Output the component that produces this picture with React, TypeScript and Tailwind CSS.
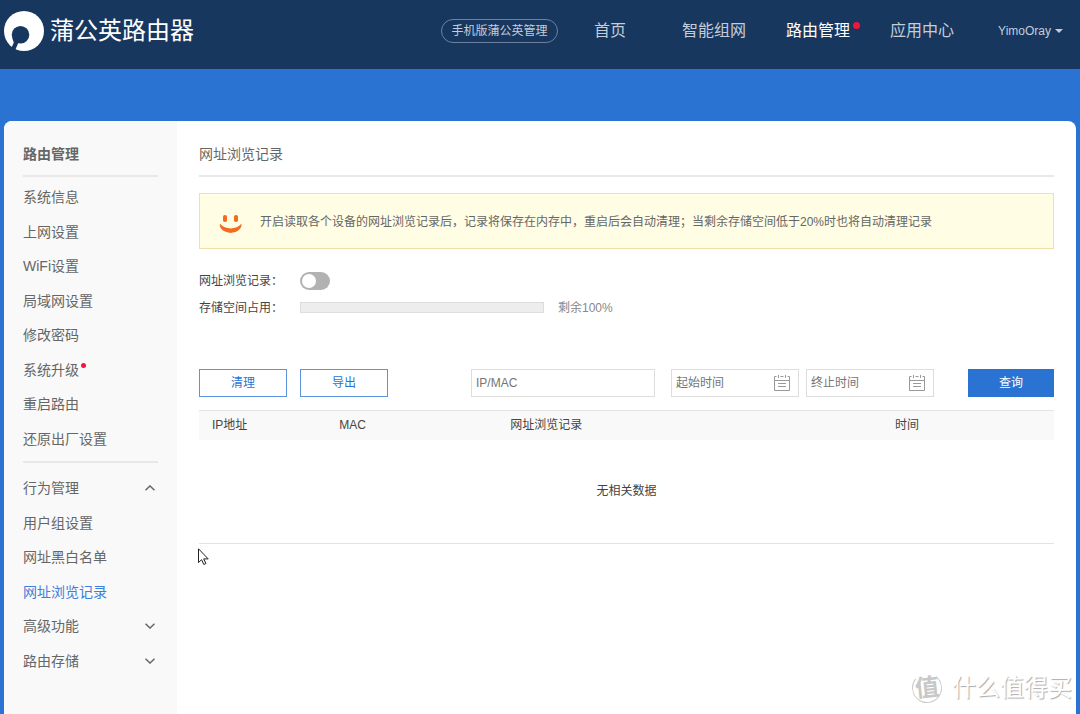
import React, { useState } from "react";

const settings = ["系统信息", "上网设置", "WiFi设置", "局域网设置", "修改密码", "系统升级", "重启路由", "还原出厂设置"];

const sections: { label: string; open?: boolean; children?: string[] }[] = [
  { label: "行为管理", open: true, children: ["用户组设置", "网址黑白名单", "网址浏览记录"] },
  { label: "高级功能" },
  { label: "路由存储" },
];

function Logo() {
  return (
    <svg className="size-10 shrink-0" viewBox="0 0 40 40" aria-hidden="true">
      <circle cx="20" cy="20" r="20" fill="#fff" />
      <circle cx="16.500" cy="23.800" r="8.800" fill="#17375f" />
      <path d="M8.200 27 L9.800 31.500 L7.500 36.800 L11 39.500 L14.500 31.500 Z" fill="#17375f" />
    </svg>
  );
}

function Chevron({ up = false }: { up?: boolean }) {
  return (
    <svg className="h-[6px] w-[10px]" viewBox="0 0 10 6" fill="none" stroke="#666" strokeWidth="1.400" aria-hidden="true">
      <path d={up ? "M0.500 5.300 L5 0.900 L9.500 5.300" : "M0.500 0.700 L5 5.100 L9.500 0.700"} />
    </svg>
  );
}

function Smile() {
  return (
    <svg className="h-[18px] w-[24px] shrink-0" viewBox="0 0 24 18" fill="#f46a1f" aria-hidden="true">
      <rect x="4" y="0" width="4" height="7" rx="1.800" />
      <rect x="15" y="0" width="4" height="7" rx="1.800" />
      <path d="M1 8.800 C6 15 17.500 15 22.300 8.800 C23.600 13.200 18 17.900 11.600 17.900 C5.200 17.900 -0.300 13.200 1 8.800 Z" />
    </svg>
  );
}

function Calendar() {
  return (
    <svg className="h-4 w-4" viewBox="0 0 16 16" fill="none" stroke="#999" aria-hidden="true">
      <path d="M2.500 1.500 H0.500 V15.500 H15.500 V1.500 H13.500 M6.500 1.500 H9.500 M0.500 5.500 H15.500 M4 8.500 H12 M4 11.500 H12" />
      <path d="M4.500 0 V3 M11.500 0 V3" />
    </svg>
  );
}

function DateBox({ label }: { label: string }) {
  return (
    <label className="flex h-7 w-32 items-center border border-[#ddd] pr-2">
      <input aria-label={label} placeholder={label} className="h-full w-0 flex-1 pl-1 outline-none placeholder:text-[#757575]" />
      <Calendar />
    </label>
  );
}

function SideLink({ label, active = false }: { label: string; active?: boolean }) {
  return (
    <a href="#" className={active ? "text-[#3d80d8]" : "text-[#666]"}>
      {label}
    </a>
  );
}

function Sidebar() {
  return (
    <nav className="w-[173px] shrink-0 bg-[#f9f9f9] px-[19px] pb-9 text-sm text-[#666]">
      <h2 className="flex h-14 items-center border-b-2 border-[#e8e8e8] pt-3 font-bold">路由管理</h2>
      <ul className="mt-[3px] grid h-[276px] auto-rows-fr items-center">
        {settings.map((label) => (
          <li key={label} className="flex items-center">
            <SideLink label={label} />
            {label === "系统升级" && <span className="mb-2 ml-[2px] size-[5px] rounded-full bg-[#f5143c]" />}
          </li>
        ))}
      </ul>
      <ul className="mt-[5px] grid h-[217px] auto-rows-fr items-center border-t-2 border-[#e8e8e8] pt-2">
        {sections.map((s) => (
          <React.Fragment key={s.label}>
            <li>
              <button type="button" aria-expanded={!!s.open} className="flex w-full items-center justify-between pr-[3px]">
                {s.label}
                <Chevron up={s.open} />
              </button>
            </li>
            {s.children?.map((c) => (
              <li key={c}>
                <SideLink label={c} active={c === "网址浏览记录"} />
              </li>
            ))}
          </React.Fragment>
        ))}
      </ul>
    </nav>
  );
}

function Header() {
  return (
    <header className="flex h-[69px] items-center bg-[#17375f] pr-[17px] pb-2 pl-1 text-base text-[#c4cdd8]">
      <Logo />
      <span className="ml-[6px] text-2xl text-white">蒲公英路由器</span>
      <nav className="ml-auto flex items-center">
        <a href="#" className="mr-9 flex h-6 w-[117px] items-center justify-center rounded-full border border-[#6e82a0] text-xs">
          手机版蒲公英管理
        </a>
        <a href="#" className="mr-14">首页</a>
        <a href="#" className="mr-10">智能组网</a>
        <a href="#" className="relative mr-10 text-white">
          路由管理
          <span className="absolute top-[3px] -right-[10px] size-[7px] rounded-full bg-[#f5143c]" />
        </a>
        <a href="#" className="mr-11">应用中心</a>
        <button type="button" className="flex items-center gap-1 text-xs">
          YimoOray
          <svg className="h-1 w-2" viewBox="0 0 8 4" fill="currentColor" aria-hidden="true">
            <path d="M0 0 H8 L4 4 Z" />
          </svg>
        </button>
      </nav>
    </header>
  );
}

export default function App() {
  const [on, setOn] = useState(false);
  return (
    <div className="relative flex min-h-screen flex-col overflow-hidden bg-[#2a73d2] font-['Liberation_Sans','Noto_Sans_CJK_SC',sans-serif]">
      <Header />
      <div className="mx-1 mt-[52px] flex flex-1 overflow-hidden rounded-t-lg bg-white">
        <Sidebar />
        <main className="min-w-0 flex-1 px-[22px] text-xs text-[#444]">
          <h1 className="flex h-14 items-center border-b-2 border-[#e8e8e8] pt-3 text-sm text-[#666]">网址浏览记录</h1>
          <div className="mt-4 flex h-14 items-center gap-[17px] border border-[#f3dfa8] bg-[#fffde3] pl-[19px] text-[#666]">
            <span className="pt-[6px]">
              <Smile />
            </span>
            <p className="pt-[2px]">开启读取各个设备的网址浏览记录后，记录将保存在内存中，重启后会自动清理；当剩余存储空间低于20%时也将自动清理记录</p>
          </div>
          <div className="mt-[18px] grid grid-cols-[101px_1fr] auto-rows-[27px] items-center">
            <label htmlFor="record">网址浏览记录：</label>
            <span className="relative flex h-[18px] w-[30px]">
              <input
                id="record"
                type="checkbox"
                role="switch"
                checked={on}
                onChange={(e) => setOn(e.target.checked)}
                className="peer h-full w-full appearance-none rounded-full bg-[#b2b2b2] checked:bg-[#2a73d2]"
              />
              <span className="pointer-events-none absolute top-[2px] left-[2px] size-[14px] rounded-full bg-white peer-checked:left-[14px]" />
            </span>
            <span>存储空间占用：</span>
            <span className="flex items-center gap-[14px] text-[#888]">
              <span className="h-[11px] w-[244px] border border-[#ddd] bg-[#ededed]" />
              剩余100%
            </span>
          </div>
          <form className="mt-12 flex items-center" onSubmit={(e) => e.preventDefault()}>
            <button type="button" className="h-7 w-[88px] border border-[#5a93de] text-[#2a73d2]">清理</button>
            <button type="button" className="ml-[13px] h-7 w-[88px] border border-[#5a93de] text-[#2a73d2]">导出</button>
            <div className="ml-auto flex items-center">
              <input aria-label="IP/MAC" placeholder="IP/MAC" className="mr-4 h-7 w-[184px] border border-[#ddd] px-1 outline-none placeholder:text-[#757575]" />
              <div className="mr-[34px] flex gap-[7px]">
                <DateBox label="起始时间" />
                <DateBox label="终止时间" />
              </div>
              <button type="submit" className="h-7 w-[86px] bg-[#2a73d2] text-white">查询</button>
            </div>
          </form>
          <table className="mt-[13px] w-full table-fixed border-y border-[#e3e3e3]">
            <thead>
              <tr className="h-[29px] bg-[#f9f9f9] text-left">
                <th className="w-[15%] pl-[13px] font-normal">IP地址</th>
                <th className="w-[20%] pl-3 font-normal">MAC</th>
                <th className="w-[45%] pl-3 font-normal">网址浏览记录</th>
                <th className="pl-3 font-normal">时间</th>
              </tr>
            </thead>
            <tbody>
              <tr className="h-[104px]">
                <td colSpan={4} className="text-center">无相关数据</td>
              </tr>
            </tbody>
          </table>
        </main>
      </div>
      <svg className="absolute top-[548px] left-[198px] h-[18px] w-3" viewBox="0 0 12 18" fill="#fff" stroke="#222" aria-hidden="true">
        <path d="M0.500 0.800 V14.500 L3.600 11.700 L5.800 16.500 L7.900 15.500 L5.700 10.900 H10.200 Z" />
      </svg>
      <div className="absolute right-2 bottom-[10px] flex items-center gap-[10px] text-2xl text-white [text-shadow:1px_1px_1px_#aaa]">
        <span className="flex size-[30px] -rotate-6 items-center justify-center rounded-full border border-[#ccc] border-t-transparent font-bold text-[#c8c8c8] [text-shadow:none]">
          值
        </span>
        什么值得买
      </div>
    </div>
  );
}
